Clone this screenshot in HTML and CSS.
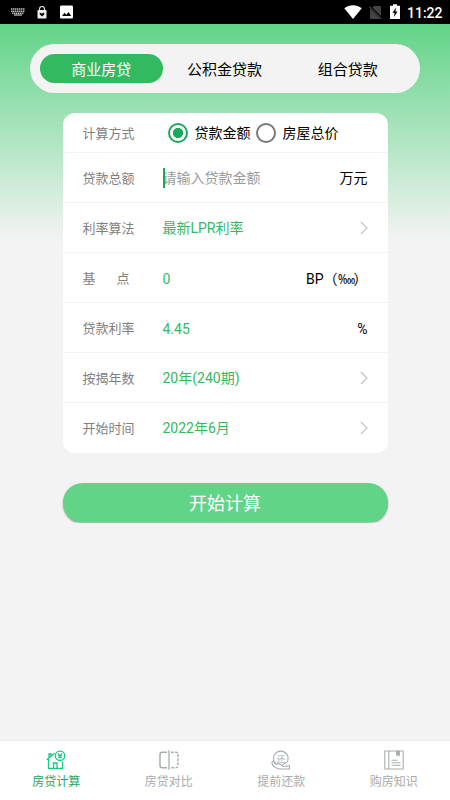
FILE: index.html
```html
<!DOCTYPE html>
<html lang="zh-CN">
<head>
<meta charset="utf-8">
<meta name="viewport" content="width=device-width, initial-scale=1">
<title>房贷计算</title>
<link rel="stylesheet" href="styles.css">
</head>
<body>
<div class="app">
  <header class="status">
    <svg class="st-key" width="14" height="8" viewBox="0 0 14 8"><path d="M0 1h14M0 3.200h14M1 5.200h12" stroke="#bbb" stroke-width="1.500" stroke-dasharray="1.500 .5"/><path d="M3 7h8" stroke="#bbb" stroke-width="1.300"/></svg>
    <svg class="st-lock" width="10" height="13" viewBox="0 0 10 13"><path d="M2.500 4V3a2.500 2.500 0 0 1 5 0v1" fill="none" stroke="#ddd" stroke-width="1.200"/><rect x=".5" y="4" width="9" height="8.500" rx=".8" fill="#eee"/><path d="M2.700 6.500l2 .9 2.300-1 .4 2L5 10.600 2.800 8.500z" fill="#111"/></svg>
    <svg class="st-img" width="13" height="14" viewBox="0 0 13 14"><rect y=".5" width="13" height="13" rx="1.300" fill="#fff"/><path d="M2 11l2.500-3.300L6.300 9.800 8.500 7l2.700 4z" fill="#000"/></svg>
    <span class="spacer"></span>
    <svg class="st-wifi" width="18" height="14" viewBox="0 0 18 14"><path d="M9 14L.3 3.300C5.300-.9 12.700-.9 17.700 3.300z" fill="#fff"/></svg>
    <svg class="st-sim" width="13" height="15" viewBox="0 0 13 15"><path d="M5 1h6a1 1 0 0 1 1 1v12H2a1 1 0 0 1-1-1V4.500z" fill="#444"/><path d="M0 1l13 13" stroke="#000" stroke-width="2.600"/><path d="M.2 1.500l12.300 12.700" stroke="#666" stroke-width="1"/></svg>
    <svg class="st-bat" width="10" height="15" viewBox="0 0 10 15"><path d="M3 .2h4v1.500h3V15H0V1.700h3z" fill="#fff"/><path d="M6 3.500L2.500 8.800h2L4 13l3.600-5.500H5.300z" fill="#000"/></svg>
    <span class="clock">11:22</span>
  </header>
  <main class="content">
    <nav class="tabs">
      <a class="tab active">商业房贷</a>
      <a class="tab">公积金贷款</a>
      <a class="tab">组合贷款</a>
    </nav>
    <section class="card">
      <div class="row first">
        <span class="label">计算方式</span>
        <div class="choices">
          <i class="radio on"></i><span>贷款金额</span>
          <i class="radio"></i><span>房屋总价</span>
        </div>
      </div>
      <div class="row"><span class="label">贷款总额</span><span class="value hint">请输入贷款金额</span><span class="unit">万元</span></div>
      <div class="row"><span class="label">利率算法</span><span class="value">最新LPR利率</span><svg class="arrow" width="8" height="14" viewBox="0 0 8 14"><path d="M1 1l6 6-6 6"/></svg></div>
      <div class="row latin"><span class="label base"><span>基</span><span>点</span></span><span class="value">0</span><span class="unit">BP（<span class="bp">‱</span>）</span></div>
      <div class="row latin"><span class="label">贷款利率</span><span class="value">4.45</span><span class="unit">%</span></div>
      <div class="row"><span class="label">按揭年数</span><span class="value">20年(240期)</span><svg class="arrow" width="8" height="14" viewBox="0 0 8 14"><path d="M1 1l6 6-6 6"/></svg></div>
      <div class="row"><span class="label">开始时间</span><span class="value">2022年6月</span><svg class="arrow" width="8" height="14" viewBox="0 0 8 14"><path d="M1 1l6 6-6 6"/></svg></div>
    </section>
    <button class="submit">开始计算</button>
  </main>
  <footer class="nav">
    <a class="item current">
      <svg width="20" height="20" viewBox="0 0 20 20"><path d="M.8 9.700L8.500 3.200M3 8V4h2v2.200M2.500 9v9.300h14V11.500M7.500 18v-5h3.500v5" stroke-width="1.300"/><circle cx="14" cy="5.800" r="4.700" stroke-width="1.300"/><path d="M12 3.300l2 2.300 2-2.300M14 5.600v3.200M12 5.800h4M12 7.300h4"/></svg>
      <span>房贷计算</span>
    </a>
    <a class="item">
      <svg width="20" height="20" viewBox="0 0 20 20"><path d="M8 2.200H3.300Q1 2.200 1 4.500v11Q1 17.800 3.300 17.800H8" stroke-width="1.500"/><path d="M10 .2v19.600" stroke-width="1.300"/><path d="M12 2.200h4.700Q19 2.200 19 4.500v11q0 2.300-2.300 2.300H12" stroke-width="1.500" stroke-dasharray="2.800 1.300"/></svg>
      <span>房贷对比</span>
    </a>
    <a class="item">
      <svg width="20" height="20" viewBox="0 0 20 20"><path d="M4.300 13.200A7.300 7.300 0 1 1 15.500 13"/><text x="10" y="12" text-anchor="middle">还</text><path d="M1 11.700Q.6 15.500 4.500 17.500L8 19h10.500v-3.300H17l-3 .8-3-.3M1 11.700l1.500-.5 2.500 3q2.500-1.300 4.500.3l2.500 1.500M11.500 14.500l4-2"/></svg>
      <span>提前还款</span>
    </a>
    <a class="item">
      <svg width="20" height="20" viewBox="0 0 20 20"><path d="M.8 1h18.400v18H.8zM4.800 1v18M7.500 10.300h6M7.500 12.800h9M7.500 15.300h9"/><path d="M12.500 1v5l1.500-1.300L15.500 6V1z" fill="currentColor" stroke-width=".8"/></svg>
      <span>购房知识</span>
    </a>
  </footer>
</div>
</body>
</html>
```
FILE: styles.css
```css
* { box-sizing: border-box; }

body {
  margin: 0;
  font-family: Roboto, "Noto Sans CJK SC", sans-serif;
  color: #000;
}

.app {
  height: 800px;
  display: flex;
  flex-direction: column;
  background: #f3f3f3;
}

.status {
  height: 24px;
  background: #000;
  display: flex;
  align-items: center;
  padding: 0 8px 0 11px;
}
.st-lock { margin-left: 12px; }
.st-img { margin-left: 13px; }
.st-sim { margin-left: 7px; }
.st-bat { margin: -1px 7px 0 8px; }
.spacer { flex: 1; }
.clock {
  width: 35px;
  color: #fff;
  font-size: 14px;
  font-weight: 500;
  white-space: nowrap;
  padding-top: 1px;
}

.content {
  flex: 1;
  padding: 20px 30px 0;
  background: linear-gradient(#61d487, #f3f3f3 216px);
}

.tabs {
  height: 49px;
  padding: 10px;
  display: grid;
  grid-template-columns: repeat(3, 1fr);
  border-radius: 25px;
  background: #f3f3f3;
}
.tab {
  display: flex;
  align-items: center;
  justify-content: center;
  padding: 0 1px 1px 0;
  border-radius: 15px;
  font-size: 15px;
}
.tab.active { background: #33b95f; color: #fff; }

.card {
  margin: 20px 32.5px 0;
  height: 339.5px;
  border-radius: 12px;
  background: #fff;
}
.row {
  height: 50px;
  padding: 0 20px;
  display: flex;
  align-items: center;
  border-bottom: 1px solid #f3f3f3;
  font-size: 14px;
}
.row.first { height: 40px; }
.row:last-child { border-bottom-color: transparent; }
.label { width: 80px; color: #808080; font-size: 13px; }
.label.base { display: flex; gap: 21px; }
.value, .unit { line-height: 20px; padding-top: 1px; }
.latin .value, .latin .unit { padding-top: 3px; }
.value { flex: 1; color: #33b95f; }
.bp {
  display: inline-block;
  width: 16px;
  font-family: "Noto Sans", sans-serif;
  transform: scaleX(.8);
  transform-origin: left;
}
.hint { color: #9b9b9b; position: relative; }
.hint::before {
  content: "";
  position: absolute;
  left: 0;
  top: 1px;
  width: 2px;
  height: 20px;
  background: #1ba85b;
}
.arrow { fill: none; stroke: #c5c5c5; stroke-width: 1.3; }

.choices { display: flex; align-items: center; padding-left: 5.4px; }
.choices span { padding-bottom: 1px; }
.radio {
  width: 20px;
  height: 20px;
  margin-right: 6.6px;
  border: 2px solid #777;
  border-radius: 50%;
}
.radio.on {
  border-color: #1ba85b;
  background: radial-gradient(circle, #1ba85b 4.8px, transparent 5.4px);
}
.choices span + .radio { margin-left: 5.4px; }

.submit {
  display: block;
  width: 325px;
  height: 40px;
  margin: 30px auto 0;
  padding: 0 0 1px;
  border: 0;
  border-radius: 20px;
  background: #61d487;
  color: #fff;
  font: inherit;
  font-size: 18px;
  box-shadow: 0 1px 2px #999;
  clip-path: inset(0 -2px);
}

.nav {
  height: 60px;
  padding-top: 9px;
  border-top: 1px solid #ebebeb;
  background: #fff;
  display: grid;
  grid-template-columns: repeat(4, 1fr);
}
.item {
  display: flex;
  flex-direction: column;
  align-items: center;
  color: #aaa;
  font-size: 12px;
  line-height: 18px;
}
.item svg { fill: none; stroke: #a7adad; stroke-width: 1.1; color: #a7adad; margin-bottom: 3px; }
.item text { font-size: 8.5px; fill: #a7adad; stroke: none; }
.item.current { color: #1ba85b; }
.item.current svg { stroke: #12ce81; }
```
